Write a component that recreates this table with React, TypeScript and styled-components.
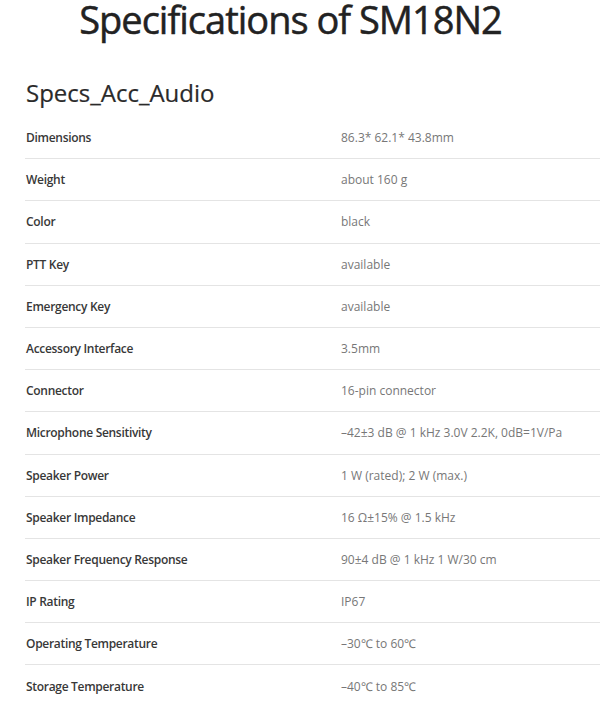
import React from 'react';
import styled, { createGlobalStyle } from 'styled-components';

const GlobalStyle = createGlobalStyle`
  body {
    margin: 0;
    background: #ffffff;
    font-family: "Open Sans", "Liberation Sans", sans-serif;
  }
`;

const Page = styled.div`
  width: 600px;
  height: 709px;
  overflow: hidden;
  background: #ffffff;
`;

const Title = styled.h1`
  margin: 0;
  padding-right: 19px;
  text-align: center;
  font-size: 38px;
  line-height: 38px;
  font-weight: 400;
  letter-spacing: -1px;
  color: #222222;
  -webkit-text-stroke: 0.5px #222222;
`;

const Section = styled.section`
  margin-top: 40px;
  padding-left: 25px;
`;

const SectionTitle = styled.h2`
  margin: 0 0 9px 1px;
  font-size: 24px;
  line-height: 30px;
  font-weight: 400;
  color: #2a2a2a;
  -webkit-text-stroke: 0.2px #2a2a2a;
`;

const SpecTable = styled.div`
  display: flex;
  flex-direction: column;
`;

const SpecRow = styled.div`
  display: grid;
  grid-template-columns: 316px 1fr;
  align-items: center;
  height: 41.2px;
  border-bottom: 1px solid #e4e4e4;
  font-size: 12px;

  &:last-child {
    border-bottom-color: transparent;
  }
`;

const Label = styled.span`
  padding-left: 1px;
  font-weight: 600;
  letter-spacing: -0.3px;
  color: #383838;
`;

const Value = styled.span`
  font-weight: 400;
  color: #777777;
`;

const specs: [string, string][] = [
  ['Dimensions', '86.3* 62.1* 43.8mm'],
  ['Weight', 'about 160 g'],
  ['Color', 'black'],
  ['PTT Key', 'available'],
  ['Emergency Key', 'available'],
  ['Accessory Interface', '3.5mm'],
  ['Connector', '16-pin connector'],
  ['Microphone Sensitivity', '–42±3 dB @ 1 kHz 3.0V 2.2K, 0dB=1V/Pa'],
  ['Speaker Power', '1 W (rated); 2 W (max.)'],
  ['Speaker Impedance', '16 Ω±15% @ 1.5 kHz'],
  ['Speaker Frequency Response', '90±4 dB @ 1 kHz 1 W/30 cm'],
  ['IP Rating', 'IP67'],
  ['Operating Temperature', '–30℃ to 60℃'],
  ['Storage Temperature', '–40℃ to 85℃'],
];

export default function App() {
  return (
    <Page>
      <GlobalStyle />
      <Title>Specifications of SM18N2</Title>
      <Section>
        <SectionTitle>Specs_Acc_Audio</SectionTitle>
        <SpecTable>
          {specs.map(([label, value]) => (
            <SpecRow key={label}>
              <Label>{label}</Label>
              <Value>{value}</Value>
            </SpecRow>
          ))}
        </SpecTable>
      </Section>
    </Page>
  );
}
